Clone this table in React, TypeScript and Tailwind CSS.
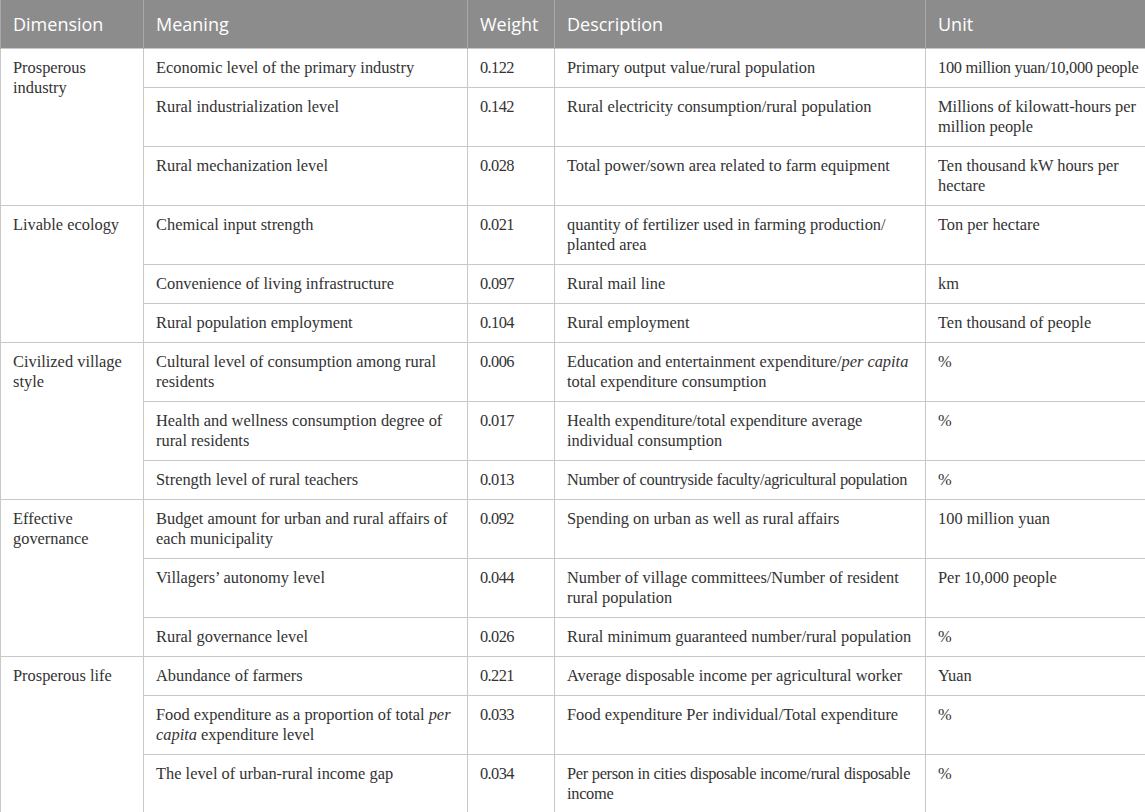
import React from "react";

type Lines = React.ReactNode[];

type Row = {
  dim?: Lines;
  meaning: Lines;
  weight: string;
  desc: Lines;
  unit: Lines;
  descTight?: boolean;
  unitTight?: boolean;
};

const rows: Row[] = [
  {
    dim: ["Prosperous", "industry"],
    meaning: ["Economic level of the primary industry"],
    weight: "0.122",
    desc: ["Primary output value/rural population"],
    unit: ["100 million yuan/10,000 people"],
    unitTight: true,
  },
  {
    meaning: ["Rural industrialization level"],
    weight: "0.142",
    desc: ["Rural electricity consumption/rural population"],
    unit: ["Millions of kilowatt-hours per", "million people"],
  },
  {
    meaning: ["Rural mechanization level"],
    weight: "0.028",
    desc: ["Total power/sown area related to farm equipment"],
    unit: ["Ten thousand kW hours per", "hectare"],
  },
  {
    dim: ["Livable ecology"],
    meaning: ["Chemical input strength"],
    weight: "0.021",
    desc: ["quantity of fertilizer used in farming production/", "planted area"],
    unit: ["Ton per hectare"],
  },
  {
    meaning: ["Convenience of living infrastructure"],
    weight: "0.097",
    desc: ["Rural mail line"],
    unit: ["km"],
  },
  {
    meaning: ["Rural population employment"],
    weight: "0.104",
    desc: ["Rural employment"],
    unit: ["Ten thousand of people"],
  },
  {
    dim: ["Civilized village", "style"],
    meaning: ["Cultural level of consumption among rural", "residents"],
    weight: "0.006",
    desc: [
      <>
        Education and entertainment expenditure/<i>per capita</i>
      </>,
      "total expenditure consumption",
    ],
    unit: ["%"],
  },
  {
    meaning: ["Health and wellness consumption degree of", "rural residents"],
    weight: "0.017",
    desc: ["Health expenditure/total expenditure average", "individual consumption"],
    unit: ["%"],
  },
  {
    meaning: ["Strength level of rural teachers"],
    weight: "0.013",
    desc: ["Number of countryside faculty/agricultural population"],
    unit: ["%"],
    descTight: true,
  },
  {
    dim: ["Effective", "governance"],
    meaning: ["Budget amount for urban and rural affairs of", "each municipality"],
    weight: "0.092",
    desc: ["Spending on urban as well as rural affairs"],
    unit: ["100 million yuan"],
  },
  {
    meaning: ["Villagers’ autonomy level"],
    weight: "0.044",
    desc: ["Number of village committees/Number of resident", "rural population"],
    unit: ["Per 10,000 people"],
  },
  {
    meaning: ["Rural governance level"],
    weight: "0.026",
    desc: ["Rural minimum guaranteed number/rural population"],
    unit: ["%"],
  },
  {
    dim: ["Prosperous life"],
    meaning: ["Abundance of farmers"],
    weight: "0.221",
    desc: ["Average disposable income per agricultural worker"],
    unit: ["Yuan"],
  },
  {
    meaning: [
      <>
        Food expenditure as a proportion of total <i>per</i>
      </>,
      <>
        <i>capita</i> expenditure level
      </>,
    ],
    weight: "0.033",
    desc: ["Food expenditure Per individual/Total expenditure"],
    unit: ["%"],
  },
  {
    meaning: ["The level of urban-rural income gap"],
    weight: "0.034",
    desc: ["Per person in cities disposable income/rural disposable", "income"],
    unit: ["%"],
    descTight: true,
  },
];

const headers = ["Dimension", "Meaning", "Weight", "Description", "Unit"];

function CellLines({ lines, tight }: { lines: Lines; tight?: boolean }) {
  return (
    <>
      {lines.map((l, i) => (
        <div key={i} className={tight ? "whitespace-nowrap tracking-[-0.3px]" : "whitespace-nowrap"}>
          {l}
        </div>
      ))}
    </>
  );
}

export default function App(): React.ReactElement {
  const cell =
    "border border-[#c8c8c8] pl-3 pr-2 pt-[9px] pb-[9px] align-top text-left leading-[20px] overflow-hidden";

  return (
    <div className="w-[1145px] bg-white">
      <table
        className="w-full table-fixed border-collapse text-[16.4px] text-[#333333]"
        style={{ fontFamily: '"Liberation Serif", "Times New Roman", serif' }}
      >
        <colgroup>
          <col className="w-[143px]" />
          <col className="w-[324px]" />
          <col className="w-[87px]" />
          <col className="w-[371px]" />
          <col className="w-[220px]" />
        </colgroup>
        <thead>
          <tr className="bg-[#8c8c8c]">
            {headers.map((h) => (
              <th
                key={h}
                className="h-[48px] border-x border-[#a8a8a8] pl-3 pr-2 text-left align-middle text-[18px] leading-[20px] font-normal text-white"
                style={{ fontFamily: '"Open Sans", "Noto Sans", sans-serif' }}
              >
                {h}
              </th>
            ))}
          </tr>
        </thead>
        <tbody>
          {rows.map((r, i) => (
            <tr key={i}>
              {r.dim && (
                <td rowSpan={3} className={cell}>
                  <CellLines lines={r.dim} />
                </td>
              )}
              <td className={cell}>
                <CellLines lines={r.meaning} />
              </td>
              <td className={cell}>
                <span className="tracking-[-0.6px]">{r.weight}</span>
              </td>
              <td className={cell}>
                <CellLines lines={r.desc} tight={r.descTight} />
              </td>
              <td className={cell}>
                <CellLines lines={r.unit} tight={r.unitTight} />
              </td>
            </tr>
          ))}
        </tbody>
      </table>
    </div>
  );
}
